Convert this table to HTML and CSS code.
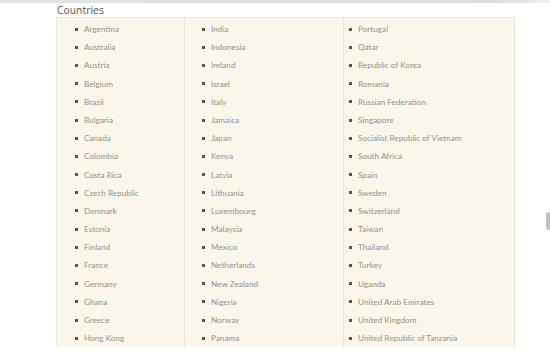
FILE: index.html
```html
<!DOCTYPE html>
<html>
<head>
<meta charset="utf-8">
<link rel="stylesheet" href="styles.css">
</head>
<body>
<div class="topbar"></div>
<div class="section">
  <h2 class="title">Countries</h2>
  <div class="box">
    <ul class="col col1">
      <li>Argentina</li><li>Australia</li><li>Austria</li><li>Belgium</li><li>Brazil</li><li>Bulgaria</li><li>Canada</li><li>Colombia</li><li>Costa Rica</li><li>Czech Republic</li><li>Denmark</li><li>Estonia</li><li>Finland</li><li>France</li><li>Germany</li><li>Ghana</li><li>Greece</li><li>Hong Kong</li>
    </ul>
    <ul class="col col2">
      <li>India</li><li>Indonesia</li><li>Ireland</li><li>Israel</li><li>Italy</li><li>Jamaica</li><li>Japan</li><li>Kenya</li><li>Latvia</li><li>Lithuania</li><li>Luxembourg</li><li>Malaysia</li><li>Mexico</li><li>Netherlands</li><li>New Zealand</li><li>Nigeria</li><li>Norway</li><li>Panama</li>
    </ul>
    <ul class="col col3">
      <li>Portugal</li><li>Qatar</li><li>Republic of Korea</li><li>Romania</li><li>Russian Federation</li><li>Singapore</li><li>Socialist Republic of Vietnam</li><li>South Africa</li><li>Spain</li><li>Sweden</li><li>Switzerland</li><li>Taiwan</li><li>Thailand</li><li>Turkey</li><li>Uganda</li><li>United Arab Emirates</li><li>United Kingdom</li><li>United Republic of Tanzania</li>
    </ul>
  </div>
</div>
<div class="edge"></div>
</body>
</html>
```
FILE: styles.css
```css
html, body {
  margin: 0;
  padding: 0;
  background: #fff;
  height: 351px;
  overflow: hidden;
}
.topbar {
  height: 3px;
  background: linear-gradient(to right, #e2e2e2 0%, #dcdcdc 90%, #f0f0f0 100%);
}
.section {
  margin-left: 56px;
  width: 459px;
}
.title {
  margin: 0;
  font-family: "Open Sans", sans-serif;
  font-weight: 400;
  font-size: 10.2px;
  letter-spacing: 0.1px;
  line-height: 14px;
  color: #555;
  height: 14px;
  padding-left: 1px;
}
.box {
  display: grid;
  grid-template-columns: 129px 159px 171px;
  background: #faf6ec;
  border-top: 1px solid #ebe8e0;
}
.col {
  list-style: none;
  margin: 0;
  padding: 2px 0 0 0;
  font-family: "Lato", sans-serif;
  font-size: 8.2px;
  color: #959189;
  border-right: 1px solid #e6e2da;
}
.col1 { padding-left: 18px; border-left: 1px solid #ece8e0; }
.col2 { padding-left: 17px; }
.col3 { padding-left: 5px; }
.col li {
  height: 18.2px;
  line-height: 18.2px;
  display: flex;
  align-items: center;
  gap: 6px;
  white-space: nowrap;
}
.col li::before {
  content: "";
  width: 3px;
  height: 3px;
  background: #555;
  flex: none;
}
.edge {
  position: absolute;
  left: 546px;
  top: 212px;
  width: 4px;
  height: 18px;
  background: #9a9a9a;
  border-radius: 3px 0 0 3px;
  opacity: 0.6;
}
```
